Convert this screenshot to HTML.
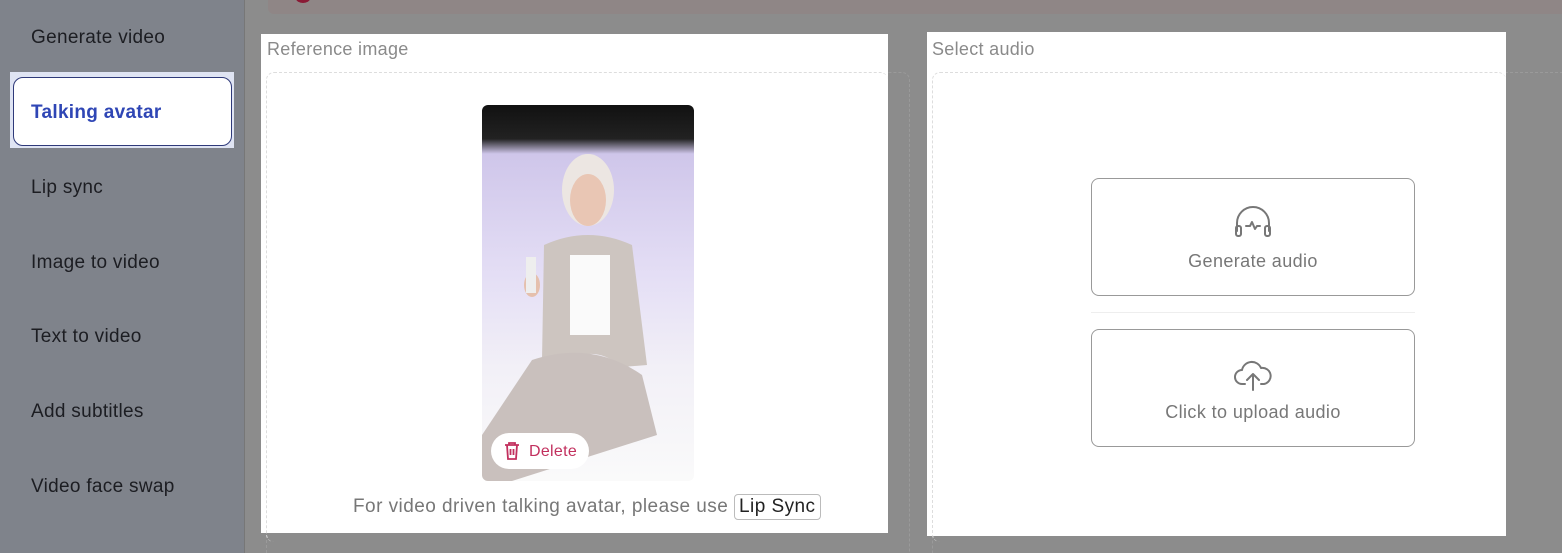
<!DOCTYPE html>
<html><head><meta charset="utf-8"><style>
*{margin:0;padding:0;box-sizing:border-box}
html,body{width:1562px;height:553px;overflow:hidden}
body{background:#8c8c8c;font-family:"Liberation Sans",sans-serif;position:relative}
.side{position:absolute;left:0;top:0;width:245px;height:553px;background:#7f838b;border-right:1px solid #777}
.it{position:absolute;left:31px;font-size:19px;color:#1c1d22;letter-spacing:0.3px}
.sel{position:absolute;left:10px;top:72px;width:224px;height:76px;background:#dfe4f3}
.sel2{position:absolute;left:13px;top:77px;width:219px;height:69px;background:#fff;border:1px solid #2f3a7a;border-radius:10px}
.banner{position:absolute;left:268px;top:0;width:1294px;height:14px;background:#8f8686;border-radius:0 0 0 6px}
.dot{position:absolute;left:296px;top:-6px;width:14px;height:9px;border-radius:50%;background:#8a1a35}
.panel{position:absolute;background:#fff}
.lbl{position:absolute;font-size:18px;color:#8a8a8a;letter-spacing:0.3px}
.dash{position:absolute;border:1px dashed #ddd;border-radius:8px}
.img{position:absolute;left:482px;top:105px;width:212px;height:376px;border-radius:6px;overflow:hidden;
background:linear-gradient(180deg,#111 0%,#222 9%,#cfc6ea 13%,#e4def5 45%,#f2f0f7 70%,#fafafa 100%)}
.btn{position:absolute;left:1091px;width:324px;height:118px;border:1px solid #999;border-radius:8px;background:#fff;text-align:center;color:#777;font-size:18px;letter-spacing:0.4px}
</style></head><body>
<div class="side">
<div class="it" style="top:27px">Generate video</div>
<div class="sel"></div><div class="sel2"></div>
<div class="it" style="top:102px;color:#2f46b5;font-weight:bold">Talking avatar</div>
<div class="it" style="top:177px">Lip sync</div>
<div class="it" style="top:252px">Image to video</div>
<div class="it" style="top:326px">Text to video</div>
<div class="it" style="top:401px">Add subtitles</div>
<div class="it" style="top:476px">Video face swap</div>
</div>
<div class="banner"></div><div class="dot"></div>
<div class="dash" style="left:266px;top:72px;width:644px;height:500px;border-color:#9a9a9a"></div>
<div class="dash" style="left:932px;top:72px;width:640px;height:500px;border-color:#9a9a9a"></div>
<div class="panel" style="left:261px;top:34px;width:627px;height:499px"></div>
<div class="panel" style="left:927px;top:32px;width:579px;height:504px"></div>
<div class="lbl" style="left:267px;top:39px">Reference image</div>
<div class="lbl" style="left:932px;top:39px">Select audio</div>
<div class="dash" style="left:266px;top:72px;width:622px;height:470px;border-bottom:none;border-right:none"></div>
<div class="dash" style="left:932px;top:72px;width:574px;height:470px;border-bottom:none;border-right:none"></div>
<div class="img">
<svg width="212" height="376" style="position:absolute;left:0;top:0">
<ellipse cx="106" cy="85" rx="26" ry="36" fill="#ece6e2"/>
<ellipse cx="106" cy="95" rx="18" ry="26" fill="#e9c6b4"/>
<path d="M62 140 Q106 120 150 140 L165 260 L140 262 Q120 245 100 250 L60 255 Z" fill="#cdc5c0"/>
<rect x="88" y="150" width="40" height="80" fill="#fafafa"/>
<path d="M50 255 Q110 235 160 270 L175 330 L30 376 L0 376 L0 330 Z" fill="#c9c0bd"/>
<ellipse cx="50" cy="180" rx="8" ry="12" fill="#e5c0ad"/>
<rect x="44" y="152" width="10" height="36" fill="#eee"/>
</svg>
<div style="position:absolute;left:9px;top:328px;width:98px;height:36px;background:#fff;border-radius:18px;color:#c2305e;font-size:16px;line-height:38px;padding-left:38px;letter-spacing:0.3px">
<svg width="18" height="20" style="position:absolute;left:12px;top:8px" fill="none" stroke="#c2305e" stroke-width="1.8"><path d="M2 4h14M6 4V2h6v2M4 4l1 14h8l1-14M7.5 8v6M10.5 8v6"/></svg>Delete</div>
</div>
<div style="position:absolute;left:353px;top:494px;font-size:19px;color:#777;letter-spacing:0.45px;white-space:nowrap">For video driven talking avatar, please use <span style="display:inline-block;border:1px solid #bbb;border-radius:4px;padding:1px 4px;color:#222">Lip Sync</span></div>
<div class="btn" style="top:178px">
<svg width="40" height="34" style="margin-top:26px" fill="none" stroke="#777" stroke-width="2" stroke-linecap="round" stroke-linejoin="round"><path d="M4 26V18a16 16 0 0 1 32 0v8"/><rect x="3" y="21" width="5" height="10" rx="2"/><rect x="32" y="21" width="5" height="10" rx="2"/><path d="M13 21h4l2-4 3 7 2-3h3"/></svg>
<div style="margin-top:7px">Generate audio</div></div>
<div style="position:absolute;left:1091px;top:312px;width:324px;height:1px;background:#eee"></div>
<div class="btn" style="top:329px">
<svg width="40" height="34" style="margin-top:28px" fill="none" stroke="#777" stroke-width="2" stroke-linecap="round" stroke-linejoin="round"><path d="M12 26H9a7 7 0 0 1 0-14 10 10 0 0 1 19-2 8 8 0 0 1 3 16h-3"/><path d="M20 32V17M14 22l6-6 6 6"/></svg>
<div style="margin-top:5px">Click to upload audio</div></div>
</body></html>
